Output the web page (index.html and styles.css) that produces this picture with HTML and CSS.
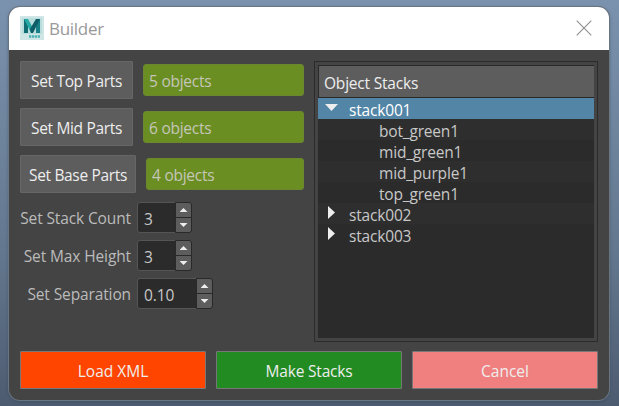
FILE: index.html
```
<!DOCTYPE html>
<html lang="en">
<head>
<meta charset="utf-8">
<title>Builder</title>
<link rel="stylesheet" href="styles.css">
</head>
<body>
<main class="window">
  <header class="titlebar">
    <svg class="logo" width="24" height="24" viewBox="0 0 24 24">
      <rect width="24" height="24" fill="#cfe5e6"/>
      <path d="M2 2h20v16H2z" fill="#b9dcdc"/>
      <path d="M4 3h4v14H4z" fill="#126e74"/>
      <path d="M16 3h4v14h-4z" fill="#178087"/>
      <path d="M4 3h4l5 9-2 5z" fill="#27a9a5"/>
      <path d="M16 3h4l-7 14h-2l-1-4z" fill="#0d5c66"/>
      <path d="M9 20.500h11" stroke="#4bb3b3" stroke-width="2.500" stroke-dasharray="2.300 .6"/>
    </svg>
    <h1 class="title">Builder</h1>
    <svg class="close" width="16" height="16" viewBox="0 0 16 16"><path d="M.7.7l14.600 14.600M15.300.7L.7 15.300" stroke="#929292" stroke-width="1.200"/></svg>
  </header>
  <div class="content">
    <div class="columns">
      <section class="controls">
        <div class="part-row"><button class="button">Set Top Parts</button><div class="field">5 objects</div></div>
        <div class="part-row"><button class="button">Set Mid Parts</button><div class="field">6 objects</div></div>
        <div class="part-row"><button class="button button-base">Set Base Parts</button><div class="field">4 objects</div></div>
        <div class="spin-row"><span class="label">Set Stack Count</span><div class="spin"><span class="value">3</span><span class="steps"><i class="step"><b class="up"></b></i><i class="step"><b class="down"></b></i></span></div></div>
        <div class="spin-row"><span class="label">Set Max Height</span><div class="spin"><span class="value">3</span><span class="steps"><i class="step"><b class="up"></b></i><i class="step"><b class="down"></b></i></span></div></div>
        <div class="spin-row"><span class="label">Set Separation</span><div class="spin spin-wide"><span class="value">0.10</span><span class="steps"><i class="step"><b class="up"></b></i><i class="step"><b class="down"></b></i></span></div></div>
      </section>
      <section class="tree-frame">
        <div class="tree">
          <div class="tree-header">Object Stacks</div>
          <div class="row selected"><span class="twist"><b class="open"></b></span>stack001</div>
          <div class="row child">bot_green1</div>
          <div class="row child alt">mid_green1</div>
          <div class="row child">mid_purple1</div>
          <div class="row child alt">top_green1</div>
          <div class="row"><span class="twist"><b class="closed"></b></span>stack002</div>
          <div class="row alt"><span class="twist"><b class="closed"></b></span>stack003</div>
        </div>
      </section>
    </div>
    <footer class="actions">
      <button class="action load">Load XML</button>
      <button class="action make">Make Stacks</button>
      <button class="action cancel">Cancel</button>
    </footer>
  </div>
</main>
</body>
</html>
```
FILE: styles.css
```
* { box-sizing: border-box; }
body {
  margin: 0;
  height: 406px;
  padding: 7px 10px 6px 9px;
  overflow: hidden;
  background: linear-gradient(#7b92ae, #647990 60%, #4d5b70);
  font: 15.5px/21px "Open Sans", "Noto Sans", sans-serif;
  color: #bbb;
}
button { font: inherit; padding: 0; border-radius: 1px; white-space: nowrap; }
.window {
  height: 393px;
  border-radius: 11px;
  overflow: hidden;
  background: #444;
  box-shadow: 0 0 0 1px #687583, 0 1px 3px 1px rgba(50, 60, 75, .4);
}
.titlebar {
  height: 43px;
  padding: 0 17px 0 11px;
  display: flex;
  align-items: center;
  background: #fff;
}
.logo { margin-top: -2px; }
.title { margin: 0 auto 0 5px; font-size: 17px; font-weight: 400; letter-spacing: -.3px; color: #999; }
.close { margin-top: -2px; }
.content { padding: 11px 11px 0; }
.columns { display: flex; justify-content: space-between; height: 281px; }
.controls { width: 284px; }
.part-row { display: flex; align-items: center; gap: 10px; margin-bottom: 9px; height: 38px; }
.button { width: 113px; height: 38px; padding-top: 3px; border: 1px solid #666; background: #5d5d5d; color: #eee; letter-spacing: -.33px; }
.button-base { width: 116px; }
.field {
  flex: 1;
  height: 32px;
  padding: 6px 5px 0;
  border: 1px solid #6c882e;
  border-radius: 3px;
  background: #6b8e23;
  color: #c4c6b8;
  letter-spacing: -.25px;
}
.spin-row { display: flex; align-items: center; gap: 6px; height: 31px; margin-bottom: 7px; }
.label { width: 111px; padding-top: 2px; text-align: right; white-space: nowrap; letter-spacing: -.12px; }
.spin { display: flex; width: 55px; height: 31px; border: 1px solid #555; border-radius: 3px; background: #2b2b2b; }
.spin-wide { width: 76px; }
.value { flex: 1; padding: 6px 0 0 6px; color: #c8c8c8; letter-spacing: -.1px; }
.steps { width: 17px; margin: -1px; border: 1px solid #292929; border-radius: 0 3px 3px 0; background: #292929; display: grid; gap: 1px; overflow: hidden; }
.step { background: #5d5d5d; display: grid; place-items: center; }
.up, .down { width: 8px; height: 4px; background: #eee; }
.up { clip-path: polygon(50% 0, 100% 100%, 0 100%); }
.down { clip-path: polygon(0 0, 100% 0, 50% 100%); }
.tree-frame { width: 284px; padding: 3px; border: 1px solid #2b2b2b; }
.tree { height: 273px; background: #2b2b2b; }
.tree-header { height: 33px; padding: 7px 5px 0; border: 1px solid #292929; background: #5d5d5d; border-right: 0; color: #eee; letter-spacing: -.2px; }
.row { display: flex; height: 21px; line-height: 25px; background: #2e2e2e; color: #c8c8c8; letter-spacing: -.18px; }
.row.alt { background: #2b2b2b; }
.row.selected { background: #5285a6; color: #fff; }
.child { padding-left: 61px; }
.twist { width: 31px; padding-left: 7px; }
.open, .closed { display: block; background: #eee; }
.open { width: 13px; height: 7px; margin-top: 6px; clip-path: polygon(0 0, 100% 0, 50% 100%); }
.closed { width: 7px; height: 13px; margin: 3px 0 0 3px; clip-path: polygon(0 0, 100% 50%, 0 100%); }
.actions { display: flex; gap: 10px; margin-top: 9px; }
.action { flex: 1; height: 38px; padding-top: 3px; border: 1px solid #777; color: #eee; }
.load { background: #ff4500; }
.make { background: #228b22; letter-spacing: -.2px; }
.cancel { background: #f08080; }
```
